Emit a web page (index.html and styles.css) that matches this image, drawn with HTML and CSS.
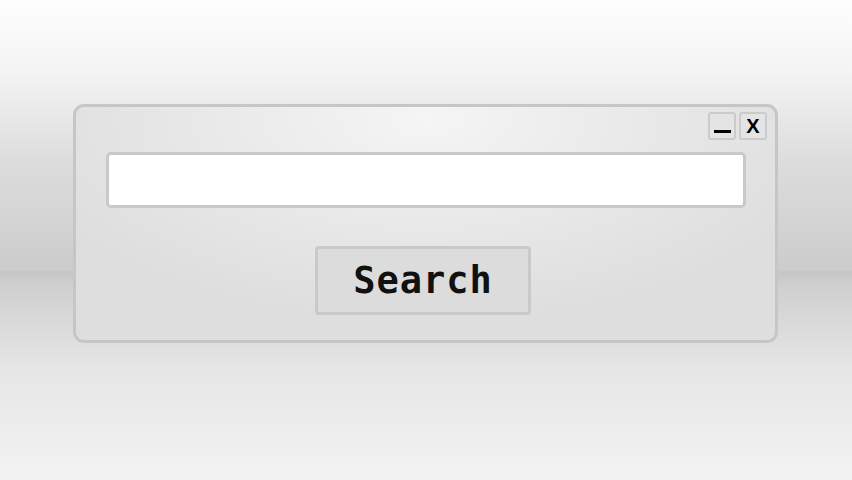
FILE: index.html
```html
<!DOCTYPE html>
<html>
<head>
<meta charset="utf-8">
<link rel="stylesheet" href="styles.css">
</head>
<body>
<div class="stage">
  <div class="window">
    <div class="titlebar">
      <div class="ctl ctl-min"><span class="bar"></span></div>
      <div class="ctl ctl-close">X</div>
    </div>
    <div class="field"></div>
    <div class="actions">
      <div class="btn">Search</div>
    </div>
  </div>
</div>
</body>
</html>
```
FILE: styles.css
```css
html, body {
  margin: 0;
  padding: 0;
  width: 852px;
  height: 480px;
  overflow: hidden;
}
body {
  background: linear-gradient(to bottom,
    #fefefe 0px,
    #f4f4f4 70px,
    #dddddd 160px,
    #cccccc 270px,
    #c6c6c6 272px,
    #cfcfcf 285px,
    #e6e6e6 370px,
    #f3f3f3 480px);
  font-family: "DejaVu Sans Mono", monospace;
}
.stage {
  padding: 104px 0 0 73px;
}
.window {
  box-sizing: border-box;
  width: 705px;
  height: 239px;
  border: 3px solid #c6c6c6;
  border-radius: 11px;
  background: radial-gradient(ellipse 420px 200px at 50% 5%, #f5f5f5 0%, #e8e8e8 55%, #dedede 100%);
  padding: 5px 8px 0 30px;
  display: flex;
  flex-direction: column;
}
.titlebar {
  display: flex;
  justify-content: flex-end;
  gap: 3px;
  height: 28px;
}
.ctl {
  box-sizing: border-box;
  width: 28px;
  height: 28px;
  border: 2px solid #cbcbcb;
  border-radius: 3px;
  background: #e4e4e4;
  display: flex;
  align-items: center;
  justify-content: center;
  color: #000;
  font-family: "Liberation Sans", sans-serif;
  font-weight: bold;
  font-size: 20px;
  line-height: 1;
}
.ctl-min {
  align-items: flex-end;
  padding-bottom: 5px;
}
.bar {
  display: block;
  width: 17px;
  height: 3px;
  background: #000;
}
.field {
  box-sizing: border-box;
  margin-top: 12px;
  margin-right: 21px;
  height: 56px;
  background: #fff;
  border: 3px solid #c9c9c9;
  border-radius: 5px;
}
.actions {
  display: flex;
  justify-content: center;
  margin-top: 38px;
  padding-right: 27px;
}
.btn {
  box-sizing: border-box;
  width: 216px;
  height: 69px;
  background: #dcdcdc;
  border: 3px solid #c9c9c9;
  border-radius: 4px;
  display: flex;
  align-items: center;
  justify-content: center;
  font-family: "DejaVu Sans Mono", monospace;
  font-weight: bold;
  font-size: 37px;
  letter-spacing: 1px;
  color: #111;
}
```
